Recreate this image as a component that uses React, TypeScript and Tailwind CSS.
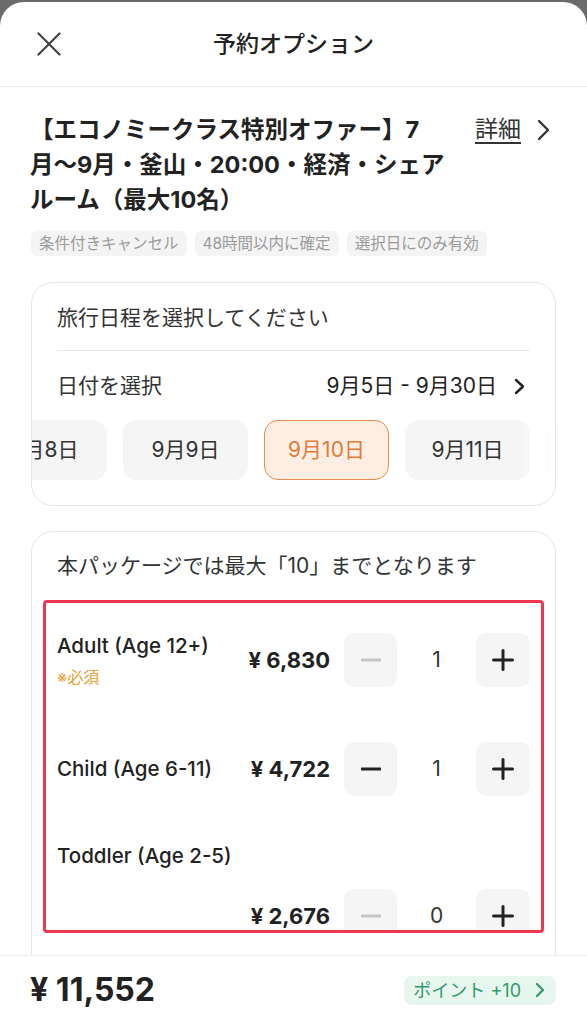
import React from "react";

function Chevron({ className = "", color = "#222", w = 12, h = 20, stroke = 2.4 }: { className?: string; color?: string; w?: number; h?: number; stroke?: number }) {
  return (
    <svg className={className} width={w} height={h} viewBox={`0 0 ${w} ${h}`} fill="none">
      <polyline points={`2,2 ${w - 2},${h / 2} 2,${h - 2}`} stroke={color} strokeWidth={stroke} strokeLinecap="round" strokeLinejoin="round" />
    </svg>
  );
}

function MinusIcon({ disabled }: { disabled?: boolean }) {
  return (
    <svg width="20" height="20" viewBox="0 0 20 20">
      <line x1="1" y1="10" x2="19" y2="10" stroke={disabled ? "#c6c6c6" : "#222"} strokeWidth="3" strokeLinecap="round" />
    </svg>
  );
}

function PlusIcon() {
  return (
    <svg width="22" height="22" viewBox="0 0 22 22">
      <line x1="1.5" y1="11" x2="20.5" y2="11" stroke="#222" strokeWidth="3" strokeLinecap="round" />
      <line x1="11" y1="1.5" x2="11" y2="20.5" stroke="#222" strokeWidth="3" strokeLinecap="round" />
    </svg>
  );
}

function Stepper({ price, count, minusDisabled }: { price: string; count: number; minusDisabled?: boolean }) {
  return (
    <>
      <span className="mr-[14px] text-[22px] font-bold">{price}</span>
      <button className="flex h-[54px] w-[53px] items-center justify-center rounded-[10px] bg-[#f5f5f5]">
        <MinusIcon disabled={minusDisabled} />
      </button>
      <span className="w-[79px] text-center text-[21px] text-[#333]">{count}</span>
      <button className="flex h-[54px] w-[54px] items-center justify-center rounded-[10px] bg-[#f5f5f5]">
        <PlusIcon />
      </button>
    </>
  );
}

const tags = ["条件付きキャンセル", "48時間以内に確定", "選択日にのみ有効"];
const dates = ["9月8日", "9月9日", "9月10日", "9月11日", "9月12日"];

export default function App() {
  const selected = "9月10日";

  return (
    <div className="h-[1024px] w-full overflow-hidden bg-[#6b6b6b] pt-[2px] font-['Inter','Noto_Sans_CJK_JP',sans-serif] text-[#222]">
      <div className="flex h-full flex-col rounded-t-[24px] bg-white">
        {/* header */}
        <div className="grid h-[85px] shrink-0 grid-cols-[1fr_auto_1fr] items-center border-b border-[#eeeeee]">
          <div className="pl-[37px]">
            <svg width="24" height="24" viewBox="0 0 24 24">
              <line x1="1.5" y1="1.5" x2="22.5" y2="22.5" stroke="#444" strokeWidth="2.2" strokeLinecap="round" />
              <line x1="22.5" y1="1.5" x2="1.5" y2="22.5" stroke="#444" strokeWidth="2.2" strokeLinecap="round" />
            </svg>
          </div>
          <h1 className="text-[23px] font-medium">予約オプション</h1>
          <div />
        </div>

        {/* content */}
        <div className="flex-1 overflow-hidden px-[31px] pt-[25px]">
          <div className="flex items-start">
            <div className="flex-1 whitespace-nowrap text-[23.5px] font-bold leading-[35px]">
              <span className="block -ml-[1px]">【エコノミークラス特別オファー】7</span>
              <span className="block -ml-[1px]">月〜9月・釜山・20:00・経済・シェア</span>
              <span className="block -ml-[1px]">ルーム（最大10名）</span>
            </div>
            <a className="mr-[6px] flex h-[35px] items-center gap-[16px]">
              <span className="text-[23px] text-[#333] underline underline-offset-[5px] decoration-[1.5px]">詳細</span>
              <Chevron w={13} h={22} stroke={2.4} color="#333" />
            </a>
          </div>

          <div className="mt-[14px] flex gap-[8px]">
            {tags.map((t) => (
              <span key={t} className="h-[25px] rounded-[6px] bg-[#f4f4f4] px-[8px] text-[15.5px] leading-[25px] text-[#9b9b9b]">
                {t}
              </span>
            ))}
          </div>

          {/* date card */}
          <div className="mt-[26px] overflow-hidden rounded-[22px] border border-[#e6e6e6] px-[25px] pt-[23px] pb-[25px]">
            <p className="text-[21px] leading-[24px] text-[#333]">旅行日程を選択してください</p>
            <div className="mt-[20px] h-px bg-[#e8e8e8]" />
            <div className="mt-[23px] flex h-[24px] items-center justify-between">
              <span className="text-[21px] text-[#333]">日付を選択</span>
              <span className="flex items-center gap-[17px] pr-[5px]">
                <span className="text-[21px]">9月5日 - 9月30日</span>
                <Chevron w={11} h={17} stroke={2.4} />
              </span>
            </div>
            <div className="relative -mx-[25px] mt-[22px] flex gap-[16px] overflow-hidden">
              {dates.map((d, i) => (
                <div
                  key={d}
                  className={
                    "flex h-[60px] w-[125px] shrink-0 items-center justify-center rounded-[14px] text-[21px] " +
                    (i === 0 ? "-ml-[50px] " : "") +
                    (d === selected
                      ? "border-[1.5px] border-[#e98a4f] bg-[#fdeee3] text-[#e47a38]"
                      : "bg-[#f5f5f5] text-[#333]")
                  }
                >
                  {d}
                </div>
              ))}
              <div className="absolute right-0 top-0 h-full w-[36px] bg-linear-to-l from-white to-transparent" />
            </div>
          </div>

          {/* travellers card */}
          <div className="mt-[25px] rounded-[22px] border border-[#e6e6e6] px-[11px] pt-[19px] pb-[60px]">
            <p className="pl-[14px] text-[21px] leading-[30px] text-[#333]">本パッケージでは最大「10」までとなります</p>
            <div className="mt-[19px] h-[333px] overflow-hidden rounded-[4px] border-[3px] border-[#ef3752] px-[11px] pt-[30px]">
              <div className="flex h-[54px] items-center">
                <div className="flex-1">
                  <div className="text-[20.5px] font-medium leading-[26px]">Adult (Age 12+)</div>
                  <div className="mt-[8px] text-[16px] leading-[20px] text-[#e9a23b]">※必須</div>
                </div>
                <Stepper price="¥ 6,830" count={1} minusDisabled />
              </div>

              <div className="mt-[55px] flex h-[54px] items-center">
                <div className="flex-1 text-[20.5px] font-medium leading-[26px]">Child (Age 6-11)</div>
                <Stepper price="¥ 4,722" count={1} />
              </div>

              <div className="mt-[47px] text-[20.5px] font-medium leading-[26px]">Toddler (Age 2-5)</div>
              <div className="mt-[20px] flex h-[54px] items-center">
                <div className="flex-1" />
                <Stepper price="¥ 2,676" count={0} minusDisabled />
              </div>
            </div>
          </div>
        </div>

        {/* bottom bar */}
        <div className="flex h-[69px] shrink-0 items-center justify-between border-t border-[#eeeeee] pl-[30px] pr-[31px]">
          <span className="text-[32px] font-bold">¥ 11,552</span>
          <span className="flex h-[29px] items-center rounded-[8px] bg-[#e7f6ee] pl-[9px] pr-[11px] text-[18px] text-[#2f9a6b]">
            ポイント +10
            <Chevron className="ml-[14px]" w={10} h={16} stroke={2.2} color="#2f9a6b" />
          </span>
        </div>
      </div>
    </div>
  );
}
